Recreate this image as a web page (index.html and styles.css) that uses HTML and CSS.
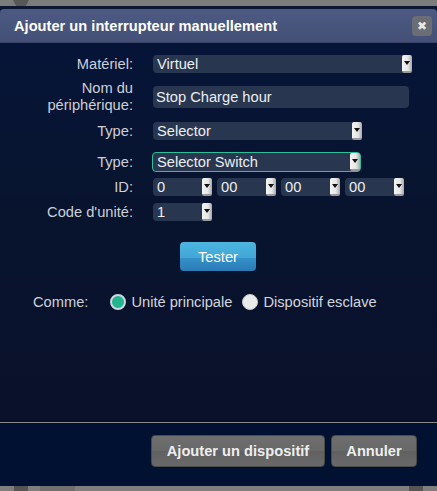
FILE: index.html
```html
<!DOCTYPE html>
<html lang="fr">
<head>
<meta charset="utf-8">
<link rel="stylesheet" href="styles.css">
</head>
<body>
<div class="page">
  <div class="topstrip"><span class="tab"></span></div>
  <div class="dialog">
    <div class="titlebar">
      <span class="title">Ajouter un interrupteur manuellement</span>
      <span class="close">&#x2716;</span>
    </div>
    <div class="content">
      <div class="row r1">
        <div class="label">Matériel:</div>
        <div class="select w-mat"><span class="val">Virtuel</span><span class="arrow"></span></div>
      </div>
      <div class="row r2">
        <div class="label two">Nom du<br>périphérique:</div>
        <div class="input">Stop Charge hour</div>
      </div>
      <div class="row r3">
        <div class="label">Type:</div>
        <div class="select w-type"><span class="val">Selector</span><span class="arrow"></span></div>
      </div>
      <div class="row r4">
        <div class="label">Type:</div>
        <div class="select w-type focus"><span class="val">Selector Switch</span><span class="arrow"></span></div>
      </div>
      <div class="row r5">
        <div class="label">ID:</div>
        <div class="ids">
          <div class="select w-id"><span class="val">0</span><span class="arrow"></span></div>
          <div class="select w-id"><span class="val">00</span><span class="arrow"></span></div>
          <div class="select w-id"><span class="val">00</span><span class="arrow"></span></div>
          <div class="select w-id"><span class="val">00</span><span class="arrow"></span></div>
        </div>
      </div>
      <div class="row r6">
        <div class="label">Code d'unité:</div>
        <div class="select w-id"><span class="val">1</span><span class="arrow"></span></div>
      </div>
      <div class="testrow"><button class="tester">Tester</button></div>
      <div class="comme">
        <span class="clabel">Comme:</span>
        <span class="radio on"></span><span class="rtext">Unité principale</span>
        <span class="radio off"></span><span class="rtext">Dispositif esclave</span>
      </div>
    </div>
    <div class="footer">
      <button class="fbtn add">Ajouter un dispositif</button>
      <button class="fbtn cancel">Annuler</button>
    </div>
  </div>
  <div class="bottomstrip"><span class="b1"></span><span class="b2"></span><span class="b3"></span></div>
</div>
</body>
</html>
```
FILE: styles.css
```css
* { box-sizing: border-box; }
html, body { margin: 0; padding: 0; }
body {
  width: 437px;
  height: 491px;
  overflow: hidden;
  background: #7a7a7a;
  font-family: "Liberation Sans", Arial, sans-serif;
  font-size: 11pt;
}
.page { width: 437px; height: 491px; display: flex; flex-direction: column; }
.topstrip {
  height: 6px;
  background: #7c7c7c;
  position: relative;
  flex: none;
}
.tab {
  position: absolute;
  left: 13px; top: 0;
  width: 16px; height: 6px;
  background: #575757;
  clip-path: polygon(0 0, 100% 0, 80% 100%, 20% 100%);
}
.dialog {
  flex: 1;
  display: flex;
  flex-direction: column;
  border-top: 3px solid #0c1733;
  background: linear-gradient(#06143a 0%, #08142f 40%, #0b1029 100%);
}
.titlebar {
  height: 34px;
  flex: none;
  display: flex;
  align-items: center;
  justify-content: space-between;
  padding: 0 5px 0 14px;
  background: linear-gradient(#4d5b84, #434f76);
  border-radius: 4px 4px 0 0;
  border-bottom: 1px solid #3a4466;
}
.title { color: #fff; font-weight: bold; font-size: 11pt; padding-top: 1px; }
.close {
  width: 20px; height: 20px;
  border-radius: 4px;
  background: #6a6d73;
  color: #e8e8e8;
  font-size: 12px;
  display: flex; align-items: center; justify-content: center;
}
.content { flex: 1; display: flex; flex-direction: column; }
.row { display: flex; align-items: center; }
.label {
  width: 133px;
  text-align: right;
  color: #cdd0d6;
  margin-right: 20px;
  line-height: 17px;
}
.r1 { margin-top: 12px; height: 18px; }
.r2 { margin-top: 7px; height: 34px; }
.r3 { margin-top: 8px; height: 18px; }
.r4 { margin-top: 12px; height: 20px; }
.r4 .label { margin-right: 19px; }
.r5 { margin-top: 6px; height: 18px; }
.r6 { margin-top: 7px; height: 18px; }
.select {
  height: 18px;
  background: #283650;
  border-radius: 4px;
  display: flex;
  align-items: center;
  justify-content: space-between;
  color: #eceef2;
  padding-left: 4px;
}
.select.focus {
  height: 20px;
  border: 1px solid #2bbf9c;
  padding-left: 4px;
}
.val { line-height: 18px; }
.arrow {
  width: 10px;
  align-self: stretch;
  background: linear-gradient(90deg, #f4f4f4 0%, #e6e6e6 60%, #a8a8a8 100%);
  border-radius: 2px;
  position: relative;
  border-bottom: 2px solid #9a9a9a;
}
.arrow::after {
  content: "";
  position: absolute;
  left: 2px; top: 50%;
  margin-top: -2px;
  border-left: 3px solid transparent;
  border-right: 3px solid transparent;
  border-top: 4px solid #111;
}
.w-mat { width: 259px; }
.w-type { width: 209px; }
.w-id { width: 59px; }
.ids { display: flex; gap: 5px; }
.input {
  width: 256px;
  height: 22px;
  background: #283650;
  border-radius: 4px;
  color: #eceef2;
  padding-left: 3px;
  line-height: 22px;
}
.testrow { margin-top: 21px; padding-left: 180px; }
.tester {
  width: 76px; height: 29px;
  border: 0;
  border-radius: 4px;
  background: linear-gradient(#4cb6e0 0%, #42a6d6 55%, #3591c9 56%, #2a7ab5 100%);
  color: #fff;
  font-family: "Liberation Sans", Arial, sans-serif;
  font-size: 11pt;
  padding: 0;
}
.comme {
  margin-top: 22px;
  height: 18px;
  display: flex;
  align-items: center;
  color: #cdd0d6;
  padding-left: 33px;
}
.clabel { margin-right: 22px; }
.radio {
  width: 16px; height: 16px;
  border-radius: 50%;
  margin-right: 5px;
}
.radio.on {
  background: #22b58f;
  border: 2px solid #cfd8e0;
  box-shadow: inset 0 0 0 1px #22b58f;
}
.radio.off {
  background: #ebebeb;
  border: 1px solid #cfcfcf;
  margin-left: 10px;
}
.rtext { color: #d4d6db; }
.footer {
  height: 64px;
  flex: none;
  border-top: 1px solid #8a8a86;
  background: #001132;
  display: flex;
  justify-content: flex-end;
  align-items: flex-start;
  padding: 12px 20px 0 0;
  gap: 6px;
}
.fbtn {
  height: 32px;
  border: 1px solid #4a4a4a;
  border-radius: 4px;
  background: linear-gradient(#6e6e6e 0%, #686868 50%, #606060 51%, #6a6a6a 100%);
  color: #eeeeee;
  font-weight: bold;
  font-family: "Liberation Sans", Arial, sans-serif;
  font-size: 11pt;
  padding: 0;
}
.add { width: 174px; }
.cancel { width: 86px; }
.bottomstrip {
  height: 5px;
  flex: none;
  background: #7e7e7e;
  position: relative;
}
.bottomstrip span { position: absolute; top: 0; height: 5px; }
.b1 { left: 14px; width: 14px; background: #555; }
.b2 { left: 40px; width: 35px; background: #6f6f6f; }
.b3 { left: 409px; width: 14px; background: #555; }
```
